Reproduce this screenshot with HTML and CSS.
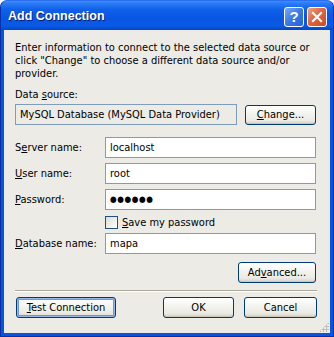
FILE: index.html
```html
<!DOCTYPE html>
<html>
<head>
<meta charset="utf-8">
<link rel="stylesheet" href="styles.css">
</head>
<body>
<div class="window">
  <div class="titlebar">
    <span class="title">Add Connection</span>
    <div class="caption-btns">
      <div class="cbtn help">?</div>
      <div class="cbtn close">
        <svg width="12" height="12" viewBox="0 0 12 12"><path d="M2 2 L10 10 M10 2 L2 10" stroke="#fff" stroke-width="2.2" stroke-linecap="square"/></svg>
      </div>
    </div>
  </div>
  <div class="client">
    <p class="intro">Enter information to connect to the selected data source or click "Change" to choose a different data source and/or provider.</p>
    <div class="ds-label">Data <u>s</u>ource:</div>
    <div class="ds-row">
      <div class="field readonly">MySQL Database (MySQL Data Provider)</div>
      <button class="btn change"><u>C</u>hange...</button>
    </div>
    <div class="form">
      <label>S<u>e</u>rver name:</label>
      <div class="field">localhost</div>
      <label><u>U</u>ser name:</label>
      <div class="field">root</div>
      <label><u>P</u>assword:</label>
      <div class="field pw">●●●●●●</div>
      <span></span>
      <div class="check"><span class="box"></span><span><u>S</u>ave my password</span></div>
      <label><u>D</u>atabase name:</label>
      <div class="field">mapa</div>
    </div>
    <div class="adv-row">
      <button class="btn adv">Ad<u>v</u>anced...</button>
    </div>
    <div class="sep"></div>
    <div class="bottom">
      <button class="btn test default"><u>T</u>est Connection</button>
      <div class="right">
        <button class="btn ok">OK</button>
        <button class="btn cancel">Cancel</button>
      </div>
    </div>
    <div class="grip"></div>
  </div>
</div>
</body>
</html>
```
FILE: styles.css
```css
* { box-sizing: border-box; }
html, body { margin: 0; padding: 0; background: #fff; }
.window {
  width: 334px; height: 337px;
  background: #0a53de;
  border-radius: 7px 7px 0 0;
  display: flex; flex-direction: column;
  font-family: "DejaVu Sans Condensed", "DejaVu Sans", sans-serif;
  font-size: 11px; color: #000;
  border: 1px solid #0831a9;
  border-top-color: #2b6ff0;
}
.titlebar {
  height: 29px; flex: none;
  display: flex; align-items: center; justify-content: space-between;
  padding: 0 6px 0 7px;
  background: linear-gradient(to bottom, #3e8efc 0%, #2a7cf6 8%, #0f60e9 30%, #0856e3 60%, #0a5ae6 85%, #0247c7 100%);
  border-radius: 6px 6px 0 0;
}
.title {
  color: #fff; font-family: "Liberation Sans", Arial, sans-serif;
  font-weight: bold; font-size: 12.5px;
  text-shadow: 1px 1px 0 #0a1e6e;
  padding-top: 1px;
}
.caption-btns { display: flex; gap: 3px; padding-top: 2px; }
.cbtn {
  width: 20px; height: 20px; border: 1px solid #fff; border-radius: 3px;
  display: flex; align-items: center; justify-content: center;
  color: #fff; font-family: "Liberation Sans", Arial, sans-serif; font-weight: bold; font-size: 15px;
}
.help { background: linear-gradient(135deg, #7aa9f7, #3b79e6 50%, #2860d8); }
.close { background: linear-gradient(135deg, #f0a080, #e06640 45%, #cf4a23); }
.client {
  flex: 1; margin: 0 3px 3px 3px;
  background: #ecebe6;
  padding: 11px 14px 0 11px;
  display: flex; flex-direction: column;
  position: relative;
}
.intro { margin: 0; line-height: 13px; width: 300px; }
.ds-label { margin-top: 8px; line-height: 13px; }
.ds-row { display: flex; justify-content: space-between; align-items: center; margin-top: 3px; }
.field {
  height: 21px; border: 1px solid #7f9db9; background: #fff;
  padding: 0 4px; display: flex; align-items: center; line-height: 13px;
}
.readonly { width: 222px; background: #ecebe6; }
.pw { letter-spacing: 0.6px; font-size: 8.5px; }
.form {
  margin-top: 12px;
  display: grid; grid-template-columns: 90px 211px;
  row-gap: 5px; align-items: center;
}
.form label { line-height: 13px; }
.check { display: flex; align-items: center; gap: 4px; height: 13px; margin: 1px 0 -1px 0; }
.box { width: 13px; height: 13px; border: 1px solid #1c5180; background: linear-gradient(135deg, #dcdcd4, #fff); }
.adv-row { display: flex; justify-content: flex-end; margin-top: 8px; }
.btn {
  font-family: inherit; font-size: 11px; color: #000;
  height: 21px; padding: 0;
  border: 1px solid #003c74; border-radius: 3px;
  background: linear-gradient(to bottom, #ffffff 0%, #f4f4f0 40%, #ebeae3 80%, #d6d0c5 100%);
  box-shadow: inset 0 -1px 0 #c9c7ba;
}
.change { width: 71px; height: 20px; }
.adv { width: 78px; }
.sep { margin-top: 7px; height: 2px; border-top: 1px solid #aca899; border-bottom: 1px solid #fff; width: 302px; }
.bottom { display: flex; justify-content: space-between; margin-top: 5px; width: 301px; margin-left: 1px; }
.right { display: flex; gap: 10px; }
.test { width: 100px; box-shadow: inset 0 0 0 1px #98b8ea, inset 0 0 0 2px #6d96e0; }
.ok { width: 71px; }
.cancel { width: 73px; }
.grip {
  position: absolute; right: 1px; bottom: 1px; width: 10px; height: 10px;
  background: radial-gradient(circle, #c2bfb2 1px, transparent 1.2px) 0 0 / 3px 3px;
  clip-path: polygon(100% 0, 100% 100%, 0 100%);
}
```
